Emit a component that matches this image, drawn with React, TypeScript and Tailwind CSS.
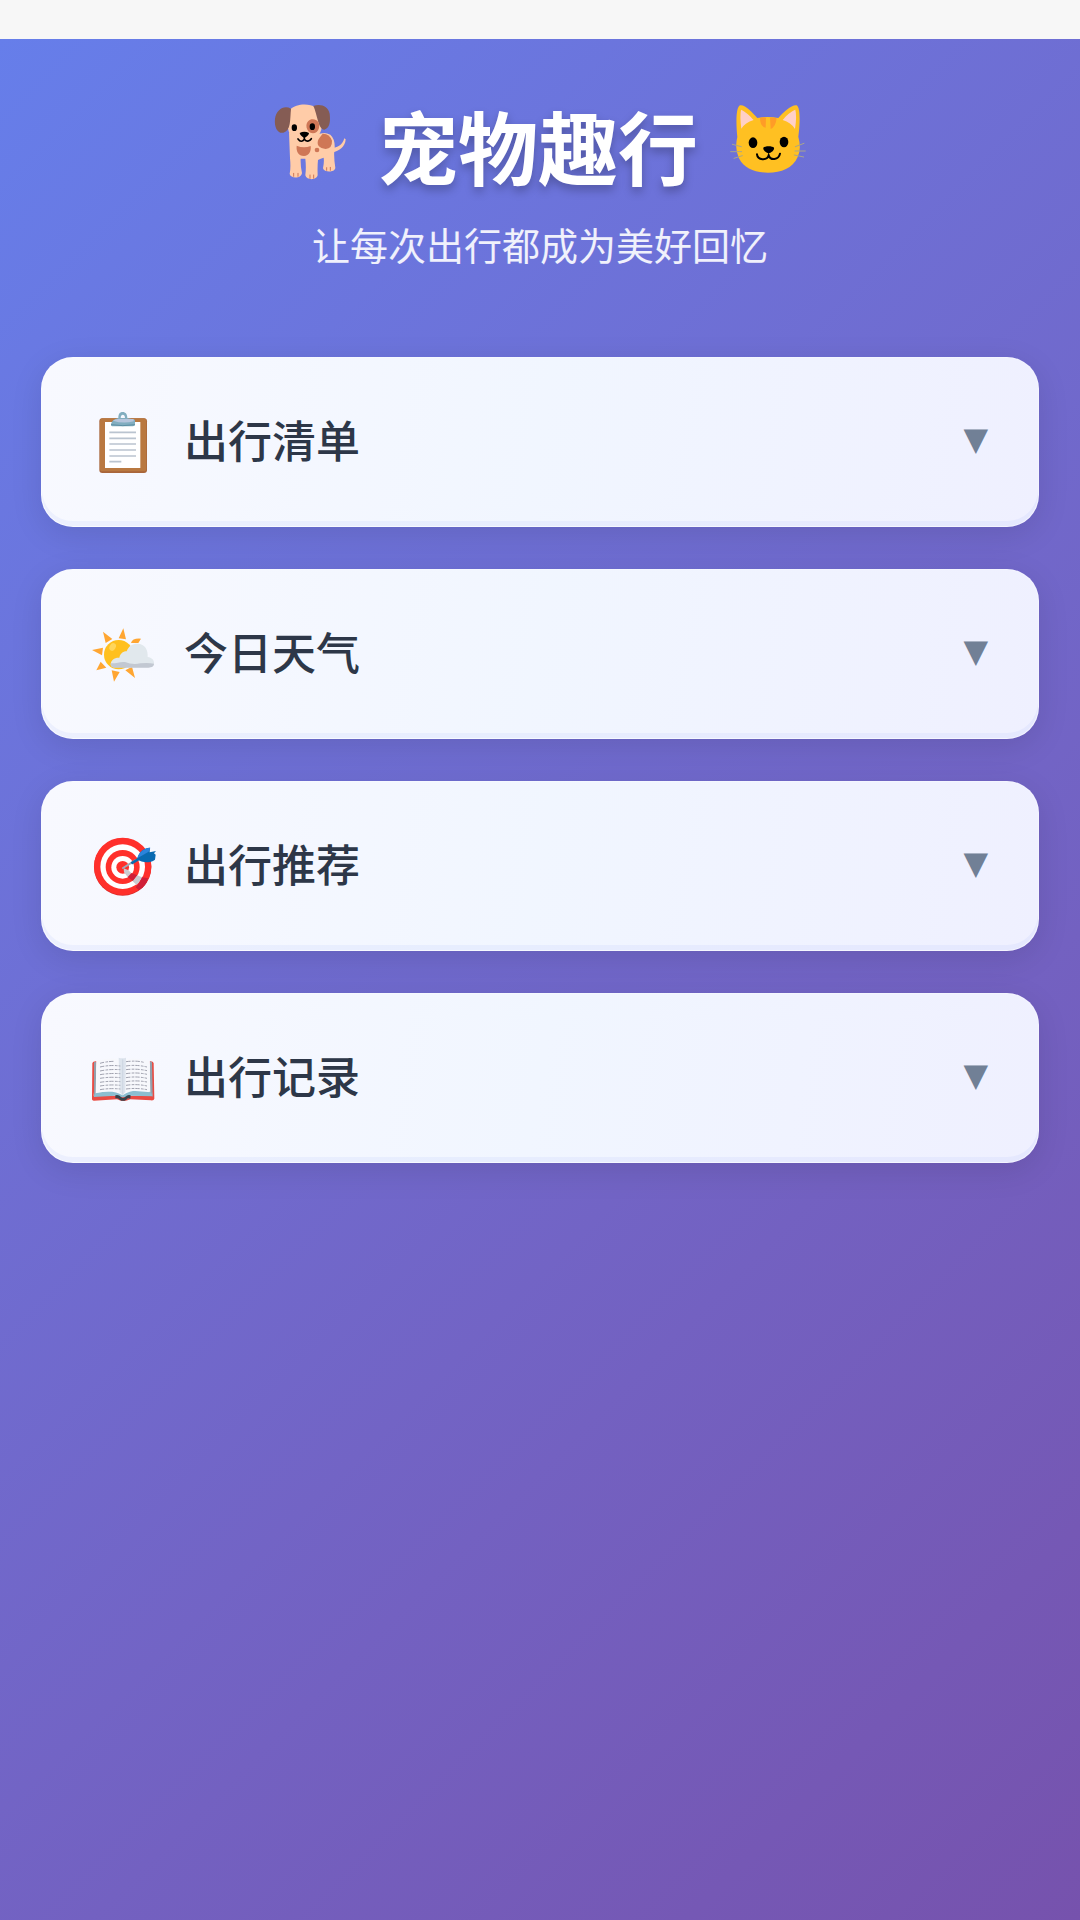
import React, { useState } from 'react';

const DogIcon: React.FC = () => (
  <svg viewBox="72 72 216 228" className="h-[76px] w-[72px]" aria-hidden="true">
    <path d="M240 205C262 204 277 196 283 175L287 178C286 200 267 215 245 218Z" fill="#ffcca8" />
    <path d="M117 156Q139 195 184 181Q211 148 241 164Q258 180 253 213Q251 230 256 264C254 278 222 278 219 265Q223 246 221 233Q212 236 204 240Q202 258 203 285C201 301 170 302 166 286Q169 262 166 236L152 236Q151 258 156 279C154 297 121 296 119 282Q123 263 120 235Z" fill="#ffcca8" />
    <path d="M121 88C137 71 178 69 196 82Q219 111 216 139C211 173 190 184 164 187C138 187 118 173 114 145Z" fill="#ffcca8" />
    <path d="M123 86C102 74 79 89 75 116C72 143 84 162 100 158C123 152 120 119 123 86Z" fill="#855c54" />
    <path d="M190 78C213 70 235 80 239 101C242 128 238 144 223 149C204 148 202 102 190 78Z" fill="#855c54" />
    <path d="M184 118C200 115 211 127 207 144C203 161 185 164 175 154C164 139 170 122 184 118Z" fill="#cf7756" />
    <path d="M218 161Q238 160 246 182Q247 205 227 207C208 205 197 195 206 177Z" fill="#cf7756" />
    <path d="M140 197Q161 206 182 198C184 213 178 227 162 228C145 227 138 215 140 197Z" fill="#cf7756" />
    <circle cx="201" cy="210" r="7" fill="#cf7756" />
    <ellipse cx="133" cy="143" rx="8" ry="10" fill="#000" />
    <ellipse cx="187" cy="140" rx="8" ry="10" fill="#000" />
    <path d="M149 159Q163 151 177 159Q177 167 163 174Q150 167 149 159Z" fill="#000" />
    <path d="M163 171V178M144 177Q154 190 163 178Q174 190 184 176" fill="none" stroke="#000" strokeWidth="5" strokeLinecap="round" />
    <path d="M131 280V289M144 280V289M180 285V295M191 285V295M230 263V271M241 262V271" stroke="#cf7756" strokeWidth="3" strokeLinecap="round" />
  </svg>
);

const CatIcon: React.FC = () => (
  <svg viewBox="567 76 228 210" className="h-[70px] w-[76px]" aria-hidden="true">
    <path d="M589 175C585 137 584 86 597 80C612 77 635 102 649 118Q680 112 712 118C728 100 751 78 767 80C779 87 777 136 772 174Q782 211 770 235C755 269 721 282 681 282C642 282 609 270 594 239Q580 210 589 175Z" fill="#ffc022" />
    <path d="M600 93C612 97 628 113 638 124Q612 132 601 150Q596 112 600 93Z" fill="#ffd0c8" />
    <path d="M763 93C750 97 734 113 725 124Q750 131 762 151Q768 112 763 93Z" fill="#ffd0c8" />
    <path d="M657 118Q667 114 675 117L674 147Q657 143 657 118ZM687 117Q697 115 707 119Q704 145 689 151Z" fill="#ff9c27" />
    <ellipse cx="636" cy="192" rx="13" ry="16" fill="#000" />
    <ellipse cx="729" cy="190" rx="13" ry="16" fill="#000" />
    <path d="M667 207C671 201 695 201 699 207C701 215 689 223 683 223C677 223 665 215 667 207Z" fill="#000" />
    <path d="M648 227C650 245 678 247 683 230C688 246 713 245 717 225" fill="none" stroke="#000" strokeWidth="6" strokeLinecap="round" />
    <path d="M574 197L601 204M569 219H602M579 239L604 231M763 204L789 194M762 217L793 217M760 229L788 235" fill="none" stroke="#a9a58c" strokeWidth="3" strokeLinecap="round" />
  </svg>
);

const ClipboardIcon: React.FC = () => (
  <svg viewBox="210 207 198 198" className="size-[66px]" aria-hidden="true">
    <rect x="238" y="235" width="143" height="164" rx="9" fill="#a9653a" />
    <rect x="240" y="235" width="139" height="159" rx="8" fill="#b97840" />
    <path d="M255 246H361V384H255Z" fill="#fff" />
    <path d="M268 277H348M268 295H348M268 312H348M268 330H348M268 348H348M268 365H304" stroke="#bac4d0" strokeWidth="5" />
    <path d="M295 234C295 222 299 216 308 216C317 216 322 223 322 234L345 239V253Q345 259 339 259H279Q272 259 273 252C276 242 283 237 295 234ZM302 234H315C315 221 302 221 302 234Z" fill="#82aec0" fillRule="evenodd" />
    <path d="M279 242Q286 236 298 237H341V244Q310 252 279 242Z" fill="#b6c5dc" />
    <path d="M273 254Q308 260 345 254" fill="none" stroke="#5d8fa3" strokeWidth="3" />
  </svg>
);

const WeatherIcon: React.FC = () => (
  <svg viewBox="210 181 198 198" className="size-[66px]" aria-hidden="true">
    <path d="M249 213L277 235L257 247ZM310 203L318 236L296 233ZM216 268L249 261L246 284ZM229 329L242 303L259 321ZM275 329L299 334L282 363ZM316 329L336 318L345 352ZM333 247Q337 232 363 234L355 247Z" fill="#ffa632" />
    <circle cx="296" cy="282" r="44" fill="#ffc01f" />
    <ellipse cx="278" cy="259" rx="9" ry="12" fill="#ffd65c" transform="rotate(30 278 259)" />
    <path d="M272 311C273 297 284 290 298 291C302 276 311 272 320 272C326 254 340 248 355 249C376 252 384 267 383 289C395 291 404 299 402 310C399 321 388 320 375 320H281Q272 319 272 311Z" fill="#e1e8ed" />
    <path d="M272 308C289 309 301 302 315 304Q338 313 361 308Q384 305 402 309C401 319 393 321 381 321H282Q271 319 272 308Z" fill="#c2c8d2" />
  </svg>
);

const TargetIcon: React.FC = () => (
  <svg viewBox="210 186 198 198" className="size-[66px]" aria-hidden="true">
    <circle cx="308" cy="288" r="86" fill="#d92a2a" />
    <circle cx="308" cy="286" r="86" fill="#ff302b" />
    <circle cx="308" cy="287" r="67" fill="#fff" />
    <circle cx="308" cy="288" r="51" fill="#ff302b" />
    <circle cx="308" cy="289" r="34" fill="#fff" />
    <circle cx="308" cy="289" r="19" fill="#ff302b" />
    {/* 飞镖投影 */}
    <path d="M311 292L324 297L334 306L323 318L312 304Z" fill="#cacbd0" />
    <path d="M334 306L352 313L340 331L323 318Z" fill="#d01f38" />
    <path d="M352 313L366 319Q358 335 350 342L338 331Z" fill="#cacbd0" />
    <path d="M366 319L384 322Q379 346 357 358L347 349Q359 336 366 319Z" fill="#d01f38" />
    <path d="M309 291L346 268" stroke="#9eacba" strokeWidth="6" strokeLinecap="round" />
    <path d="M334 277L358 263" stroke="#0d6bac" strokeWidth="8" />
    <path d="M351 265C356 244 369 231 390 230L389 244L408 240L402 247L407 251L405 266C388 278 367 275 351 265Z" fill="#096ab1" />
    <path d="M352 262C356 244 371 231 391 230L386 242Z" fill="#2b83dc" />
  </svg>
);

const BookIcon: React.FC = () => (
  <svg viewBox="210 190 198 198" className="size-[66px]" aria-hidden="true">
    <path d="M217 244Q219 238 230 239L221 342H397L389 239Q399 238 401 244L403 351Q402 357 393 356L331 353Q310 363 291 353L222 357Q215 357 216 349Z" fill="#e94b43" />
    <path d="M222 242L228 241L231 338L222 345ZM390 239L396 242L398 345L388 338Z" fill="#93a0ac" />
    <path d="M226 333L308 325L393 332L397 344L330 342Q308 352 286 342L221 346Z" fill="#8cbed0" />
    <path d="M229 238C261 229 290 226 307 240C326 226 357 230 389 238L391 331C355 323 328 326 308 341C287 327 258 326 227 335Z" fill="#f7f8fc" />
    <path d="M296 228Q308 231 318 228L316 331L308 341L299 332Z" fill="#dde4ed" />
    <path d="M308 233V339" stroke="#c4cedb" strokeWidth="2" />
    <path d="M240 245Q255 240 281 239M240 256Q270 249 301 253M240 268Q268 262 301 264M240 279Q270 274 301 276M240 290Q270 285 301 288M240 302Q270 297 301 300M240 313Q270 308 301 311M240 324Q270 319 301 322M318 240Q350 236 371 242M318 253Q348 248 381 256M318 264Q350 260 381 267M318 276Q350 271 381 278M318 288Q350 283 381 290M318 300Q350 295 381 301M318 311Q350 306 381 313M318 322Q350 318 381 324" fill="none" stroke="#a0a2af" strokeWidth="3" strokeDasharray="13 4 8 3" />
    <path d="M286 341Q296 338 303 346Q309 352 316 345Q323 338 332 341L331 351Q323 348 319 354Q309 361 299 354Q295 349 286 350Z" fill="#37424b" />
  </svg>
);

interface Section {
  id: string;
  title: string;
  icon: React.ReactNode;
}

const sections: Section[] = [
  { id: 'checklist', title: '出行清单', icon: <ClipboardIcon /> },
  { id: 'weather', title: '今日天气', icon: <WeatherIcon /> },
  { id: 'recommend', title: '出行推荐', icon: <TargetIcon /> },
  { id: 'records', title: '出行记录', icon: <BookIcon /> },
];

const App: React.FC = () => {
  const [openId, setOpenId] = useState<string | null>(null);

  return (
    <div className="flex min-h-screen flex-col bg-[#f7f7f7] pt-[39px] font-['Noto_Sans_CJK_SC',sans-serif]">
      <main className="flex-1 bg-linear-135 from-[#667eea] to-[#7652ad] px-[41px] pt-[65px] pb-10">
        <header className="mb-[83px] text-center">
          <div className="flex items-start justify-center gap-8">
            <DogIcon />
            <h1 className="text-[80px] leading-[80px] font-bold text-white [text-shadow:0_5px_10px_rgba(0,0,0,0.25)]">宠物趣行</h1>
            <CatIcon />
          </div>
          <p className="mt-[30px] text-[38px] leading-[60px] text-white/90">让每次出行都成为美好回忆</p>
        </header>

        {/* 功能列表 */}
        <div className="space-y-[42px]">
          {sections.map(s => (
            <section key={s.id} className="overflow-hidden rounded-[32px] border border-white/30 bg-linear-100 from-[#f8f9ff] via-[#f1f6ff] to-[#eff0ff] bg-origin-border shadow-[0_8px_32px_rgba(0,0,0,0.1),inset_0_-5px_0_rgba(102,126,234,0.07)]">
              <button
                type="button"
                aria-expanded={openId === s.id}
                onClick={() => setOpenId(openId === s.id ? null : s.id)}
                className="flex h-[168px] w-full items-center gap-7 px-12 text-left"
              >
                {s.icon}
                <span className="flex-1 pb-1.5 text-[44px] leading-[64px] font-medium text-[#2d3748]">{s.title}</span>
                <span className="pr-0.5 pb-1.5 font-['DejaVu_Sans',sans-serif] text-[32px] leading-[40px] text-[#718096]">▼</span>
              </button>
              {openId === s.id && <div className="px-12 pb-12 text-[36px] text-[#718096]">暂无内容</div>}
            </section>
          ))}
        </div>
      </main>
    </div>
  );
};

export default App;
